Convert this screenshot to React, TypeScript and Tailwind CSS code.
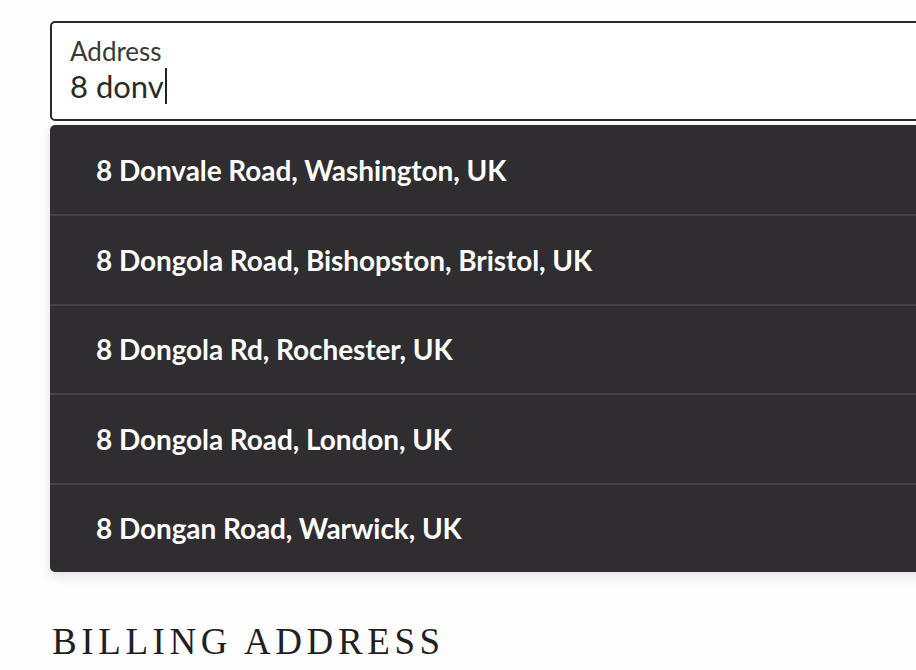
const suggestions = [
  "8 Donvale Road, Washington, UK",
  "8 Dongola Road, Bishopston, Bristol, UK",
  "8 Dongola Rd, Rochester, UK",
  "8 Dongola Road, London, UK",
  "8 Dongan Road, Warwick, UK",
];

export default function App() {
  return (
    <div className="w-[916px] h-[670px] overflow-hidden bg-[#fefefe] font-['Lato','Liberation_Sans',sans-serif]">
      <div className="pl-[50px] pt-[21px] w-[960px]">
        {/* Address input */}
        <div className="h-[100px] border-2 border-[#2a292b] rounded-[5px] bg-white px-[18px] pt-[12px]">
          <div className="text-[26px] leading-[32px] text-[#3a3a3a]">Address</div>
          <div className="flex items-center text-[31px] leading-[38px] text-[#2a2a2a]">
            <span>8 donv</span>
            <span className="w-[2px] h-[36px] bg-[#222] ml-[1px]" />
          </div>
        </div>

        {/* Suggestions dropdown */}
        <div className="mt-[4px] bg-[#2f2d30] rounded-[5px] shadow-[0_4px_12px_rgba(0,0,0,0.12)] overflow-hidden">
          {suggestions.map((s, i) => (
            <div
              key={s}
              className={
                "h-[89.4px] flex items-center pl-[46px] text-white text-[28px] font-bold tracking-[-0.08px] " +
                (i > 0 ? "border-t-2 border-[#444245]" : "")
              }
            >
              {s}
            </div>
          ))}
        </div>

        {/* Section heading */}
        <h2 className="mt-[48px] ml-[2px] text-[37px] leading-[44px] tracking-[4.6px] text-[#1f1f24] font-['Liberation_Serif',serif]">
          BILLING ADDRESS
        </h2>
      </div>
    </div>
  );
}
